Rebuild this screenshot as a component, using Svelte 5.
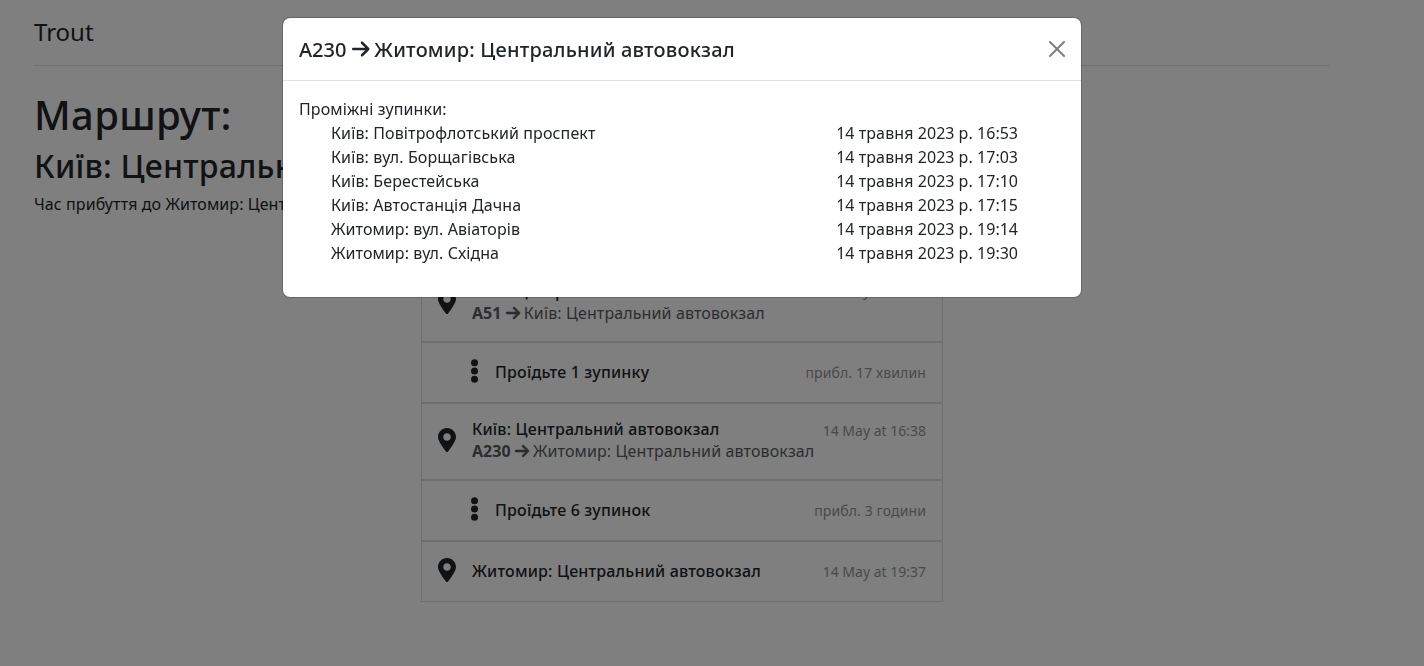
<script>
  const rows = [
    { kind: 'stop', h: 77, title: 'Київ: Центральний вокзал', line: 'А51', dest: 'Київ: Центральний автовокзал', time: '14 May at 16:21', first: true },
    { kind: 'ride', h: 61, title: 'Проїдьте 1 зупинку', time: 'прибл. 17 хвилин' },
    { kind: 'stop', h: 77, title: 'Київ: Центральний автовокзал', line: 'А230', dest: 'Житомир: Центральний автовокзал', time: '14 May at 16:38' },
    { kind: 'ride', h: 61, title: 'Проїдьте 6 зупинок', time: 'прибл. 3 години' },
    { kind: 'stop', h: 61, title: 'Житомир: Центральний автовокзал', time: '14 May at 19:37' }
  ];
  const stops = [
    ['Київ: Повітрофлотський проспект', '16:53'],
    ['Київ: вул. Борщагівська', '17:03'],
    ['Київ: Берестейська', '17:10'],
    ['Київ: Автостанція Дачна', '17:15'],
    ['Житомир: вул. Авіаторів', '19:14'],
    ['Житомир: вул. Східна', '19:30']
  ];
</script>

{#snippet arrow()}
  <svg class="arrow" viewBox="0 0 448 512" aria-hidden="true"><path fill="currentColor" stroke="currentColor" d="M438.600 278.600c12.500-12.500 12.500-32.800 0-45.300l-160-160c-12.500-12.500-32.800-12.500-45.300 0s-12.500 32.800 0 45.300L338.800 224 32 224c-17.700 0-32 14.300-32 32s14.300 32 32 32l306.700 0L233.400 393.400c-12.500 12.500-12.500 32.800 0 45.300s32.800 12.500 45.300 0l160-160z"/></svg>
{/snippet}

<div class="page">
  <main>
    <header>Trout</header>
    <h1>Маршрут:</h1>
    <h2>Київ: Центральний вокзал</h2>
    <p class="arrival">Час прибуття до Житомир: Центральний автовокзал</p>
    <div class="list">
      {#each rows as r}
        <div class="row {r.kind}" class:detailed={r.line} class:first={r.first} style:height="{r.h}px">
          {#if r.kind === 'stop'}
            <svg class="pin" viewBox="0 0 384 512" aria-hidden="true"><path fill="currentColor" d="M215.700 499.200C267 435 384 279.400 384 192C384 86 298 0 192 0S0 86 0 192c0 87.400 117 243 168.300 307.200c12.300 15.300 35.100 15.300 47.400 0zM192 272c44.183 0 80-35.817 80-80s-35.817-80-80-80-80 35.817-80 80 35.817 80 80 80z" fill-rule="evenodd"/></svg>
          {:else}
            <svg class="dots" viewBox="0 0 8 24" aria-hidden="true"><g fill="currentColor"><circle cx="4.500" cy="3.700" r="3.500"/><circle cx="4.500" cy="12" r="3.500"/><circle cx="4.500" cy="20.300" r="3.500"/></g></svg>
          {/if}
          <div class="info">
            <div class="title">{r.title}</div>
            {#if r.line}<div class="sub"><b>{r.line}</b> {@render arrow()} <span class="dest">{r.dest}</span></div>{/if}
          </div>
          <small class:ua={r.kind === 'ride'}>{r.time}</small>
        </div>
      {/each}
    </div>
  </main>
</div>

<div class="backdrop"></div>

<div class="modal">
  <div class="dialog">
    <div class="head">
      <h5>А230 {@render arrow()} <span>Житомир: Центральний автовокзал</span></h5>
      <button aria-label="Close"><svg viewBox="0 0 16 16"><path d="M.293.293a1 1 0 0 1 1.414 0L8 6.586 14.293.293a1 1 0 1 1 1.414 1.414L9.414 8l6.293 6.293a1 1 0 0 1-1.414 1.414L8 9.414l-6.293 6.293a1 1 0 0 1-1.414-1.414L6.586 8 .293 1.707a1 1 0 0 1 0-1.414z"/></svg></button>
    </div>
    <div class="body">
      <div class="label">Проміжні зупинки:</div>
      <ul>
        {#each stops as [name, t]}
          <li><span class:tight={name.startsWith('Житомир')}>{name}</span><span class="when">14 <i>травня</i> 2023 <i>р.</i> {t}</span></li>
        {/each}
      </ul>
    </div>
  </div>
</div>

<style>
  :global(body) {
    margin: 0;
    overflow: hidden;
    background: #fff;
    color: #212529;
    font: 16px/24px "Noto Sans", "Liberation Sans", sans-serif;
  }
  .page { width: 1364px; height: 666px; overflow: hidden; }
  main { width: 1296px; margin: 0 auto; }
  header {
    box-sizing: border-box;
    height: 66px;
    padding-top: 14px;
    font-size: 24px;
    line-height: 36px;
    border-bottom: 1px solid #dee2e6;
  }
  h1, h2, h5, p { margin: 0; font-weight: 500; }
  h1 { margin-top: 25px; font-size: 40px; line-height: 48px; letter-spacing: .35px; }
  h2 { margin-top: 8px; font-size: 32px; line-height: 38px; letter-spacing: .25px; }
  p.arrival { margin-top: 7px; font-weight: 400; letter-spacing: .09px; }
  .list { width: 522px; margin: 49px auto 0; }
  .row {
    box-sizing: border-box;
    display: flex;
    align-items: center;
    border: 1px solid #dfdfdf;
    padding: 0 16px;
  }
  .pin { width: 18px; height: 24px; margin: 0 16px 4px 0; flex: none; }
  .dots { width: 8px; height: 24px; margin: 0 17px 3px 32px; flex: none; }
  .info { flex: 1; white-space: nowrap; padding-bottom: 2px; }
  .detailed .info { padding-bottom: 4px; }
  .title { font-weight: 500; line-height: 22px; letter-spacing: .175px; }
  .sub { line-height: 22px; opacity: .75; }
  .dest { letter-spacing: .12px; }
  .arrow { width: .875em; height: 1em; vertical-align: -.125em; overflow: visible; }
  .sub .arrow { stroke-width: 20; }
  h5 .arrow { stroke-width: 0; }
  small { font-size: 14px; line-height: 21px; opacity: .5; }
  .ua { letter-spacing: .12px; }
  .detailed small { align-self: flex-start; margin-top: 16px; }
  .first small { margin-top: 14px; }
  .backdrop { position: fixed; inset: 0; background: rgba(0, 0, 0, .5); }
  .modal { position: absolute; top: 17px; left: 0; width: 1364px; }
  .dialog {
    box-sizing: border-box;
    width: 800px;
    height: 281px;
    margin: 0 auto;
    background: #fff;
    background-clip: padding-box;
    border: 1px solid rgba(0, 0, 0, .175);
    border-radius: 8px;
  }
  .head {
    box-sizing: border-box;
    height: 63px;
    padding: 0 16px;
    display: flex;
    align-items: center;
    justify-content: space-between;
    border-bottom: 1px solid #dee2e6;
  }
  h5 { font-size: 20px; line-height: 30px; padding-top: 2px; }
  h5 .arrow { vertical-align: -.1em; }
  h5 span { letter-spacing: .2px; }
  button { border: 0; background: none; padding: 0; width: 16px; height: 16px; opacity: .5; }
  button svg { display: block; width: 16px; height: 16px; }
  .body { padding: 16px; }
  .label, li { letter-spacing: .12px; }
  .tight { letter-spacing: .07px; }
  .when { letter-spacing: 0; }
  .when i { font-style: normal; letter-spacing: .15px; }
  ul { list-style: none; margin: 0; padding: 0 47px 0 32px; }
  li { display: flex; justify-content: space-between; }
</style>
